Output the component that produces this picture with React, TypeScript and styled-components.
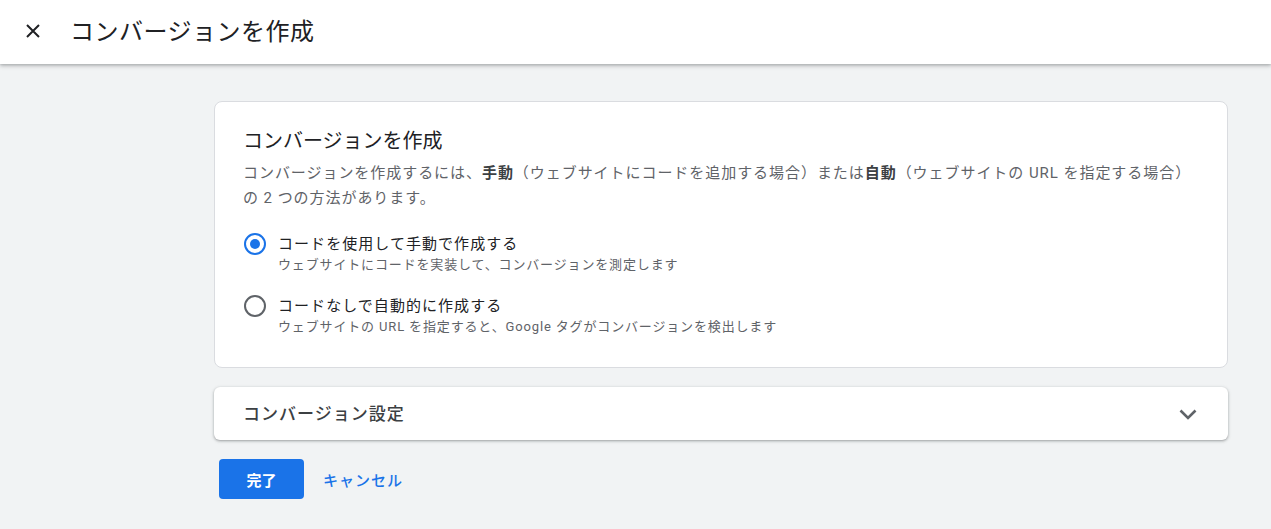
import React, { useState } from 'react'
import styled, { createGlobalStyle } from 'styled-components'

const GlobalStyle = createGlobalStyle`
  html, body {
    margin: 0;
    padding: 0;
    background: #f1f3f4;
    font-family: Roboto, "Noto Sans CJK JP", sans-serif;
    color: #202124;
  }
`

const options = [
  {
    id: 'manual',
    label: 'コードを使用して手動で作成する',
    sub: 'ウェブサイトにコードを実装して、コンバージョンを測定します',
  },
  {
    id: 'auto',
    label: 'コードなしで自動的に作成する',
    sub: 'ウェブサイトの URL を指定すると、Google タグがコンバージョンを検出します',
  },
]

const App: React.FC = () => {
  const [method, setMethod] = useState('manual')

  return (
    <>
      <GlobalStyle />
      <Page>
        <Header>
          <CloseButton aria-label="閉じる">
            <svg width="14" height="14" viewBox="0 0 14 14">
              <path d="M1 1L13 13M13 1L1 13" stroke="#202124" strokeWidth="2" />
            </svg>
          </CloseButton>
          <HeaderTitle>コンバージョンを作成</HeaderTitle>
        </Header>

        <Main>
          <Card>
            <CardTitle>コンバージョンを作成</CardTitle>
            <Description>
              コンバージョンを作成するには、<b>手動</b>（ウェブサイトにコードを追加する場合）または<b>自動</b>（ウェブサイトの URL を指定する場合）の 2 つの方法があります。
            </Description>
            <RadioList>
              {options.map((o) => (
                <RadioRow key={o.id} onClick={() => setMethod(o.id)}>
                  <RadioCircle $checked={method === o.id} />
                  <RadioText>
                    <RadioLabel>{o.label}</RadioLabel>
                    <RadioSub>{o.sub}</RadioSub>
                  </RadioText>
                </RadioRow>
              ))}
            </RadioList>
          </Card>

          <Panel>
            <PanelTitle>コンバージョン設定</PanelTitle>
            <svg width="24" height="24" viewBox="0 0 24 24">
              <path d="M4.5 8.5l7.5 7.5 7.5-7.5" fill="none" stroke="#5f6368" strokeWidth="2.6" />
            </svg>
          </Panel>

          <Actions>
            <PrimaryButton>完了</PrimaryButton>
            <TextButton>キャンセル</TextButton>
          </Actions>
        </Main>
      </Page>
    </>
  )
}

const Page = styled.div`
  min-height: 529px;
  background: #f1f3f4;
`

const Header = styled.header`
  height: 64px;
  background: #fff;
  display: flex;
  align-items: center;
  padding-left: 19px;
  box-shadow: 0 2px 4px rgba(60, 64, 67, 0.3), 0 1px 2px rgba(60, 64, 67, 0.15);
  position: relative;
`

const CloseButton = styled.button`
  width: 28px;
  height: 28px;
  border: none;
  background: none;
  padding: 0;
  display: flex;
  align-items: center;
  justify-content: center;
  margin-right: 23px;
  margin-top: -2px;
  cursor: pointer;
`

const HeaderTitle = styled.h1`
  margin: -6px 0 0 0;
  font-size: 24px;
  font-weight: 400;
  letter-spacing: 0.5px;
  color: #202124;
`

const Main = styled.main`
  width: 1014px;
  margin-left: 214px;
  padding-top: 37px;
  display: flex;
  flex-direction: column;
`

const Card = styled.section`
  background: #fff;
  border: 1px solid #dadce0;
  border-radius: 8px;
  padding: 25px 40px 30px 28px;
`

const CardTitle = styled.h2`
  margin: 0;
  font-size: 20px;
  line-height: 28px;
  font-weight: 400;
  color: #202124;
`

const Description = styled.p`
  margin: 6px 0 0 0;
  font-size: 15px;
  line-height: 25px;
  letter-spacing: 0.95px;
  color: #5f6368;
  b {
    font-weight: 700;
    color: #3c4043;
  }
`

const RadioList = styled.div`
  margin-top: 22px;
  display: flex;
  flex-direction: column;
  gap: 20px;
`

const RadioRow = styled.label`
  display: flex;
  align-items: flex-start;
  gap: 12px;
  cursor: pointer;
`

const RadioCircle = styled.span<{ $checked: boolean }>`
  flex: none;
  width: 22px;
  height: 22px;
  margin-left: 1px;
  box-sizing: border-box;
  border-radius: 50%;
  border: 2px solid ${(p) => (p.$checked ? '#1a73e8' : '#5f6368')};
  display: flex;
  align-items: center;
  justify-content: center;
  &::after {
    content: '';
    width: 10px;
    height: 10px;
    border-radius: 50%;
    background: ${(p) => (p.$checked ? '#1a73e8' : 'transparent')};
  }
`

const RadioText = styled.div`
  display: flex;
  flex-direction: column;
`

const RadioLabel = styled.span`
  font-size: 15px;
  line-height: 22px;
  letter-spacing: 1.05px;
  color: #202124;
`

const RadioSub = styled.span`
  font-size: 13px;
  line-height: 20px;
  letter-spacing: 0.85px;
  color: #5f6368;
`

const Panel = styled.section`
  margin-top: 19px;
  height: 53px;
  background: #fff;
  border-radius: 6px;
  box-shadow: 0 1px 2px rgba(60, 64, 67, 0.3), 0 1px 3px 1px rgba(60, 64, 67, 0.15);
  display: flex;
  align-items: center;
  justify-content: space-between;
  padding: 0 28px 0 29px;
`

const PanelTitle = styled.h3`
  margin: -3px 0 0 0;
  font-size: 17px;
  font-weight: 500;
  letter-spacing: 1px;
  color: #3c4043;
`

const Actions = styled.div`
  margin-top: 19px;
  display: flex;
  align-items: center;
  gap: 19px;
  padding-left: 5px;
`

const PrimaryButton = styled.button`
  width: 85px;
  height: 40px;
  border: none;
  border-radius: 4px;
  background: #1a73e8;
  color: #fff;
  font-family: Roboto, "Noto Sans CJK JP", sans-serif;
  font-size: 15px;
  font-weight: 700;
  cursor: pointer;
`

const TextButton = styled.button`
  border: none;
  background: none;
  padding: 0;
  color: #1a73e8;
  font-family: Roboto, "Noto Sans CJK JP", sans-serif;
  font-size: 15px;
  font-weight: 500;
  letter-spacing: 1px;
  cursor: pointer;
`

export default App
